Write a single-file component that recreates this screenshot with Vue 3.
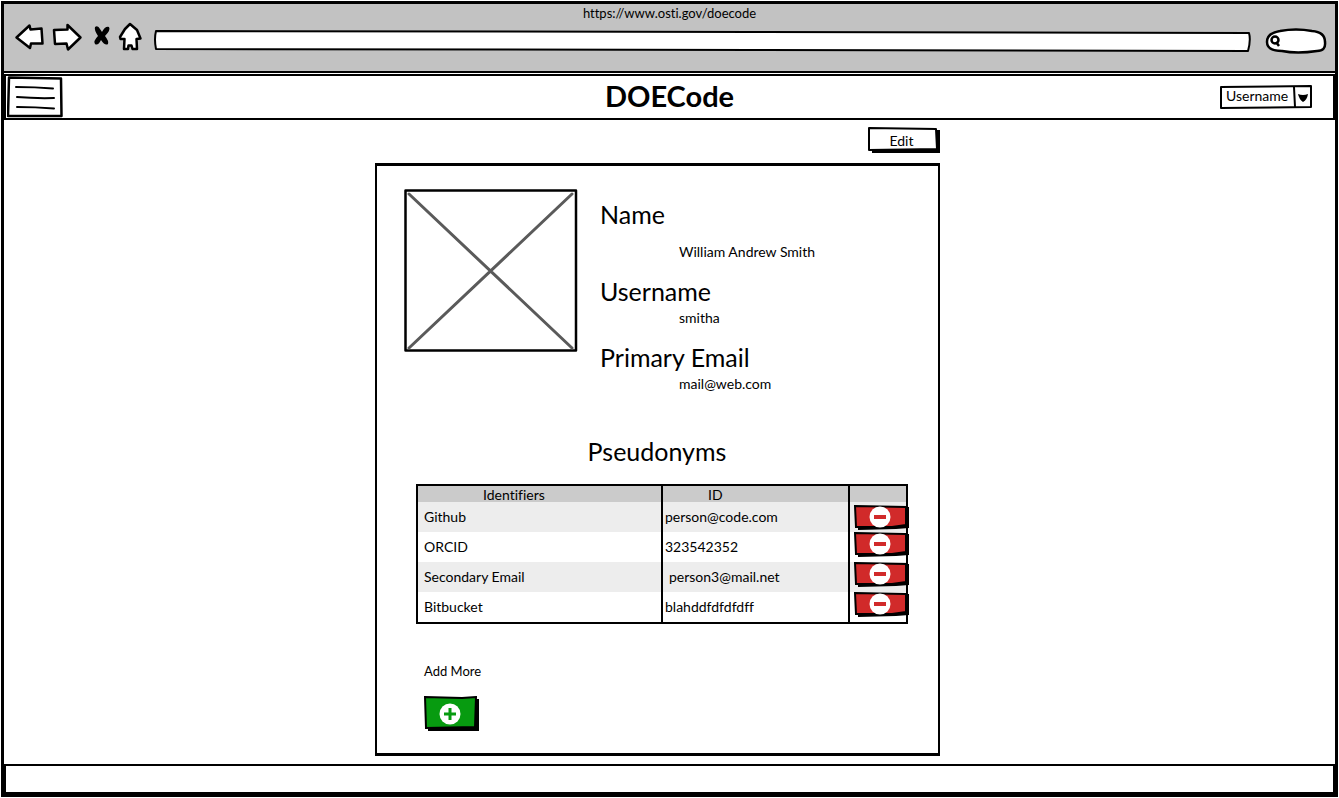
<script setup>
import { ref } from 'vue'

const url = ref('')
const search = ref('')
const account = ref('Username')

const profile = [
  { label: 'Name', value: 'William Andrew Smith', spacious: true },
  { label: 'Username', value: 'smitha' },
  { label: 'Primary Email', value: 'mail@web.com' },
]

const pseudonyms = ref([
  { source: 'Github', id: 'person@code.com' },
  { source: 'ORCID', id: '323542352' },
  { source: 'Secondary Email', id: 'person3@mail.net', indented: true },
  { source: 'Bitbucket', id: 'blahddfdfdfdff' },
])

function remove(index) {
  pseudonyms.value.splice(index, 1)
}

function add() {
  pseudonyms.value.push({ source: '', id: '' })
}
</script>

<template>
  <div class="window">
    <div class="chrome">
      <div class="window-title">https://www.osti.gov/doecode</div>
      <div class="toolbar">
        <button class="tool" type="button" aria-label="Back">
          <svg width="34" height="32" viewBox="14 22 34 32">
            <path class="ink-shape" d="M16.500 37.500 L29.500 25.500 L30.500 29.500 L41.500 28.500 L42.500 43.500 L31 43.500 L30 48 Z" />
          </svg>
        </button>
        <button class="tool" type="button" aria-label="Forward">
          <svg width="40" height="32" viewBox="48 22 40 32">
            <path class="ink-shape" d="M54 30 L67.500 29.500 L67.500 25 L80.500 37.500 L68 49.500 L66.500 43.500 L55 44 Z" />
          </svg>
        </button>
        <button class="tool" type="button" aria-label="Stop">
          <svg width="27" height="32" viewBox="88 22 27 32">
            <path d="M95 27 Q98 25 100 29 L102 32 Q105 26 109 27 Q111 30 105 36 Q109 41 108 44 Q105 46 101 40 Q98 46 95 44 Q93 41 98 36 Q94 30 95 27 Z" />
          </svg>
        </button>
        <button class="tool" type="button" aria-label="Home">
          <svg width="30" height="32" viewBox="115 22 30 32">
            <path class="ink-shape" d="M130 24 L125 29 L120 37 L120.500 39 L124.500 39 L124 49 L128 49 L128.500 45.500 L131.500 45.500 L132.500 49 L137 49 L136.500 39 L140.500 38.500 L137 30 Z" />
          </svg>
        </button>
        <div class="sketched address">
          <svg class="outline" viewBox="0 0 1100 22" preserveAspectRatio="none" aria-hidden="true">
            <path d="M3 1 Q1 9 3 19 L600 20 L1097 21 Q1100 10 1098 3 L600 2 Z" />
          </svg>
          <input v-model="url" class="field" type="text" aria-label="Address" />
        </div>
        <div class="sketched search">
          <svg class="outline" viewBox="0 0 62 26" preserveAspectRatio="none" aria-hidden="true">
            <path d="M15 3 Q31 0 47 3 Q60 4 60 14 Q61 23 52 23 Q32 26 17 23 Q2 23 2 14 Q2 5 15 3 Z" />
          </svg>
          <svg class="lens" width="12" height="14" viewBox="0 0 12 14" aria-hidden="true">
            <circle cx="6" cy="6" r="3.500" />
            <path d="M7 8 L10 12" />
          </svg>
          <input v-model="search" class="field" type="search" aria-label="Search" />
        </div>
      </div>
    </div>

    <header class="header">
      <button class="menu" type="button" aria-label="Menu">
        <svg width="56" height="42" viewBox="0 0 56 42">
          <path class="ink-shape" d="M2 1.500 L54 2.500 L54.500 40 L1 40 Z" />
          <path class="rule" d="M9 11 Q28 11 46 12.500 M10 21 Q28 22.500 47 22 M10 31 Q28 31 47 32.500" />
        </svg>
      </button>
      <h1 class="brand">DOECode</h1>
      <div class="sketched account">
        <svg class="outline" viewBox="0 0 92 24" preserveAspectRatio="none" aria-hidden="true">
          <path d="M1 2 L91 1 L91 22 L1 23 Z" />
        </svg>
        <select v-model="account" class="account-select" aria-label="Account">
          <option>Username</option>
        </select>
        <svg class="caret" width="19" height="22" viewBox="0 0 19 22" aria-hidden="true">
          <path d="M1 1 L2 21" class="rule" />
          <path d="M5 8 Q10 10 15 8 Q14 14 10 16 Q6 13 5 8 Z" />
        </svg>
      </div>
    </header>

    <main class="main">
      <div class="page">
        <div class="actions">
          <button class="raised edit" type="button">
            <svg class="outline" viewBox="0 0 73 27" preserveAspectRatio="none" aria-hidden="true">
              <path class="shadow" d="M5 23 L69 22 L69 3 L73 3 L73 26 L5 26 Z" />
              <path d="M2 1 L69 2 L70 22 L2 23 Z" />
            </svg>
            <span class="face">Edit</span>
          </button>
        </div>

        <section class="card">
          <div class="profile">
            <svg class="photo" viewBox="0 0 174 164" role="img" aria-label="Profile picture">
              <path class="ink-shape" d="M1.500 1.500 L172 1.500 L172 161.500 L1.500 161.500 Z" />
              <path class="cross" d="M5 5 L168 159 M168 5 L5 159" />
            </svg>
            <dl class="details">
              <div v-for="item in profile" :key="item.label" class="detail" :class="{ spacious: item.spacious }">
                <dt>{{ item.label }}</dt>
                <dd>{{ item.value }}</dd>
              </div>
            </dl>
          </div>

          <h2 class="section-title">Pseudonyms</h2>

          <table class="ids">
            <colgroup>
              <col class="col-source" />
              <col class="col-id" />
              <col />
            </colgroup>
            <thead>
              <tr>
                <th scope="col" class="head-source">Identifiers</th>
                <th scope="col" class="head-id">ID</th>
                <td></td>
              </tr>
            </thead>
            <tbody>
              <tr v-for="(row, index) in pseudonyms" :key="index">
                <td class="source">{{ row.source }}</td>
                <td class="id" :class="{ indented: row.indented }">{{ row.id }}</td>
                <td class="control">
                  <button class="raised remove" type="button" :aria-label="`Remove ${row.source}`" @click="remove(index)">
                    <svg width="56" height="25" viewBox="0 0 56 25">
                      <path class="shadow" d="M4 22 L52 20 L52 2 L55 2 L55 23 L42 24 L4 25 Z" />
                      <path class="red" d="M1 1 L52 2 L52 20 L38 22 L2 22 Z" />
                      <circle class="disc" cx="26" cy="12" r="10.500" />
                      <rect class="red-mark" x="20" y="10" width="12" height="4" />
                    </svg>
                  </button>
                </td>
              </tr>
            </tbody>
          </table>

          <div class="add">
            <label for="add-more">Add More</label>
            <button id="add-more" class="raised" type="button" @click="add">
              <svg width="56" height="36" viewBox="0 0 56 36">
                <path class="shadow" d="M4 31 L51 31 L51 3 L55 3 L55 35 L4 35 Z" />
                <path class="green" d="M1 1 L38 2 L52 1 L51 31 L2 32 Z" />
                <circle class="disc" cx="26" cy="18" r="10.500" />
                <path class="green-mark" d="M20 18 H32 M26 12 V24" />
              </svg>
            </button>
          </div>
        </section>
      </div>
    </main>

    <footer class="footer"></footer>
  </div>
</template>

<style>
body {
  margin: 0;
  background: #fff;
}
</style>

<style scoped>
.window {
  box-sizing: border-box;
  display: flex;
  flex-direction: column;
  min-height: calc(100vh - 2px);
  margin: 1px 1px 0;
  border: 3px solid #000;
  border-bottom-width: 4px;
  background: #fff;
  color: #000;
  font-family: Lato, "Open Sans", sans-serif;
  font-size: 14px;
  line-height: 18px;
  font-variant-ligatures: none;
}

button,
input,
select {
  margin: 0;
  padding: 0;
  border: 0;
  background: none;
  color: inherit;
  font: inherit;
}

button {
  cursor: pointer;
}

svg {
  display: block;
}

.chrome {
  padding-bottom: 17px;
  border-bottom: 2px solid #000;
  background: #c2c2c2;
}

.window-title {
  font-size: 13px;
  text-align: center;
}

.toolbar {
  display: flex;
  align-items: flex-end;
  padding: 0 8px 0 10px;
}

.ink-shape {
  fill: #fff;
  stroke: #000;
  stroke-width: 2.5;
  stroke-linejoin: round;
}

.rule {
  fill: none;
  stroke: #000;
  stroke-width: 2;
  stroke-linecap: round;
}

.sketched,
.raised {
  position: relative;
}

.outline {
  position: absolute;
  inset: 0;
  width: 100%;
  height: 100%;
}

.outline path {
  fill: #fff;
  stroke: #000;
  stroke-width: 2;
  stroke-linejoin: round;
  vector-effect: non-scaling-stroke;
}

.address {
  flex: 1;
  height: 22px;
  margin: 0 14px 2px 8px;
}

.search {
  display: flex;
  align-items: center;
  width: 62px;
  height: 26px;
}

.search .outline path {
  stroke-width: 2.5;
}

.field {
  position: relative;
  box-sizing: border-box;
  width: 100%;
  height: 100%;
  padding: 0 8px;
  outline: none;
}

.search .field {
  padding: 0 4px;
}

.lens {
  position: relative;
  flex: none;
  margin-left: 4px;
  fill: none;
  stroke: #000;
  stroke-width: 2.5;
}

.header {
  display: grid;
  grid-template-columns: 1fr auto 1fr;
  align-items: center;
  height: 42px;
  margin-top: 1px;
  padding: 0 21px 0 1px;
  border: 2px solid #000;
}

.menu {
  justify-self: start;
}

.brand {
  margin: 0;
  padding: 0 0 2px 20px;
  font-size: 29px;
  line-height: 32px;
  font-weight: 700;
}

.account {
  display: flex;
  justify-self: end;
  align-items: center;
  width: 92px;
  height: 24px;
}

.account-select {
  position: relative;
  width: 100%;
  height: 100%;
  padding: 0 22px 2px 6px;
  appearance: none;
}

.caret {
  position: absolute;
  right: 0;
  pointer-events: none;
}

.main {
  display: flex;
  flex: 1;
  justify-content: center;
  padding: 7px 24px 8px 0;
}

.page {
  width: 565px;
}

.actions {
  display: flex;
  justify-content: flex-end;
  margin-bottom: 9px;
}

.edit {
  width: 73px;
  height: 27px;
}

.face {
  position: relative;
  padding-right: 4px;
}

.outline .shadow,
.shadow {
  fill: #000;
  stroke: none;
}

.card {
  display: flex;
  flex-direction: column;
  border: 2px solid #000;
  border-width: 3px 2px;
  padding: 23px 28px 21px 27px;
}

.profile {
  display: flex;
  gap: 22px;
}

.photo {
  flex: none;
  width: 174px;
  height: 164px;
}

.cross {
  stroke: #5a5a5a;
  stroke-width: 3;
  stroke-linecap: round;
}

.details {
  display: flex;
  flex-direction: column;
  gap: 16px;
  margin: 11px 0 0;
}

.detail {
  display: flex;
  flex-direction: column;
  gap: 4px;
}

.spacious {
  gap: 15px;
}

dt,
.section-title {
  font-size: 25px;
  line-height: 28px;
  font-weight: 400;
}

dd {
  margin: 0 0 0 79px;
}

.section-title {
  margin: 44px 0 19px;
  text-align: center;
}

.ids {
  width: 492px;
  margin-left: 12px;
  border: 2px solid #000;
  border-spacing: 0;
  table-layout: fixed;
}

.col-source {
  width: 245px;
}

.col-id {
  width: 187px;
}

.ids th,
.ids td {
  padding: 0;
  font-weight: 400;
  text-align: left;
}

.ids tr > :not(:last-child) {
  border-right: 2px solid #000;
}

.ids thead tr {
  height: 16px;
  background: #cbcbcb;
  line-height: 15px;
}

.ids .head-source {
  padding-left: 65px;
}

.ids .head-id {
  padding-left: 45px;
}

.ids tbody tr {
  height: 30px;
}

.ids tbody tr:nth-child(odd) {
  background: #ededed;
}

.ids .source {
  padding-left: 6px;
}

.ids .id {
  padding-left: 2px;
}

.ids .indented {
  padding-left: 6px;
}

.ids .control {
  padding-left: 4px;
  vertical-align: top;
}

.ids tr:first-child .control {
  vertical-align: middle;
}

.remove {
  display: block;
}

.red,
.green {
  stroke: #000;
  stroke-width: 2;
}

.red {
  fill: #d12a2a;
}

.red-mark {
  fill: #d12a2a;
}

.green {
  fill: #079b10;
}

.green-mark {
  stroke: #079b10;
  stroke-width: 3;
}

.disc {
  fill: #fff;
}

.add {
  display: flex;
  flex-direction: column;
  align-items: flex-start;
  gap: 16px;
  margin: 38px 0 0 20px;
  font-size: 13px;
}

.footer {
  height: 26px;
  border: 2px solid #000;
  border-bottom-width: 1px;
}
</style>
